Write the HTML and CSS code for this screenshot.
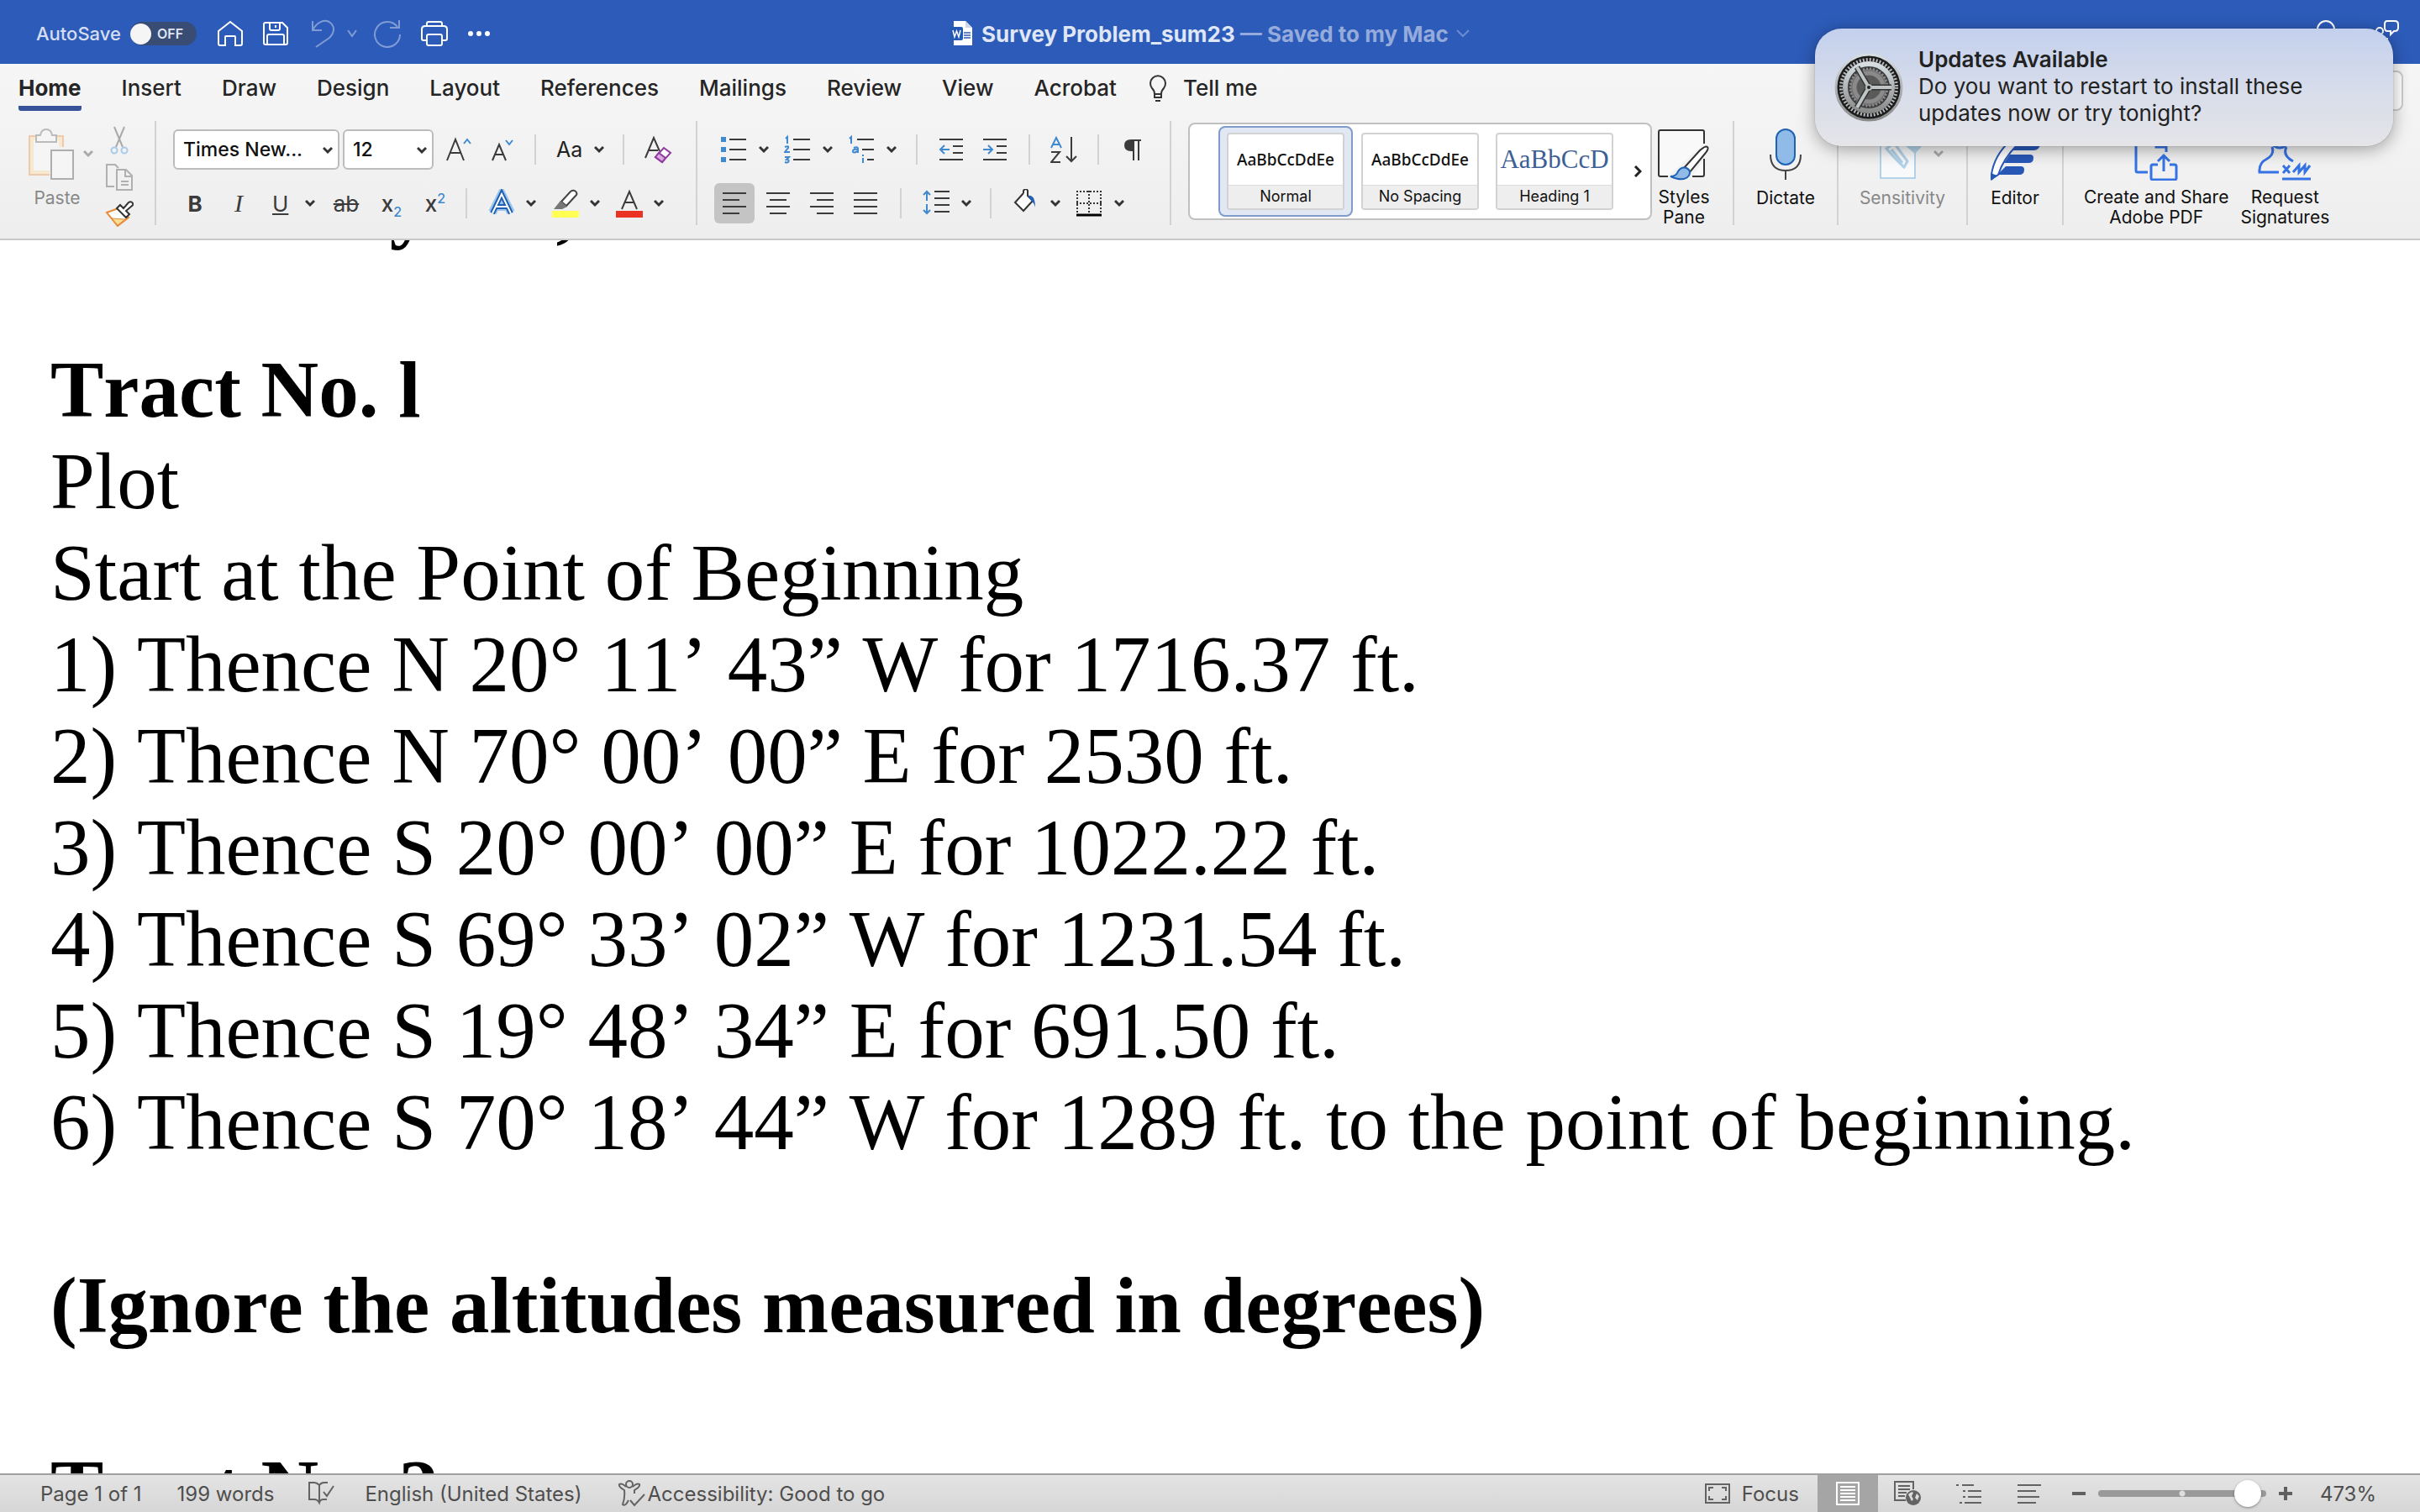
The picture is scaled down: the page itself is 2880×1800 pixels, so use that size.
FILE: index.html
```html
<!DOCTYPE html>
<html lang="en">
<head>
    <meta charset="UTF-8">
    <title>Survey Problem_sum23</title>
    <link rel="stylesheet" href="styles.css">
</head>
<body>
    <!-- shared icons -->
    <svg class="defs" width="0" height="0">
        <symbol id="chev" viewBox="0 0 12 10"><path d="M1 2l5 5 5-5" fill="none" stroke="currentColor" stroke-width="3"/></symbol>
    </svg>

    <div class="app">
        <header class="titlebar">
            <div class="quick">
                <label class="autosave" for="autosave">AutoSave</label>
                <span class="toggle"><input type="checkbox" id="autosave"><span>OFF</span></span>
                <button class="tb home" aria-label="Home"><svg width="32" height="32" viewBox="0 0 32 32"><path d="M2 13L16 2l14 11v15q0 2-2 2h-6V20q0-1-1-1H11q-1 0-1 1v10H4q-2 0-2-2z"/></svg></button>
                <button class="tb save" aria-label="Save"><svg width="32" height="32" viewBox="0 0 32 32"><path d="M4 3h20l6 6v18q0 2-2 2H4q-2 0-2-2V5q0-2 2-2zM9 3v7q0 2 2 2h8q2 0 2-2V3M6 29V19q0-2 2-2h16q2 0 2 2v10M16 6v3"/></svg></button>
                <button class="tb undo" aria-label="Undo" disabled><svg width="32" height="34" viewBox="0 0 32 34"><path d="M4 2v11h11M4 13C9 3 19-1 25 4c6 5 5 12-1 18L8 33"/></svg></button>
                <button class="tb small" aria-label="Undo options" disabled><svg width="14" height="12" viewBox="0 0 14 12"><path d="M2 2l5 7 5-7"/></svg></button>
                <button class="tb redo" aria-label="Redo" disabled><svg width="34" height="34" viewBox="0 0 34 34"><path d="M31 1v9H20M29 9A15 15 0 1 0 32 18"/></svg></button>
                <button class="tb print" aria-label="Print"><svg width="34" height="32" viewBox="0 0 34 32"><path d="M8 7V4q0-2 2-2h14q2 0 2 2v3M8 24H4q-2 0-2-2V11q0-4 4-4h22q4 0 4 4v11q0 2-2 2h-4M10 17h14q2 0 2 2v9q0 2-2 2H10q-2 0-2-2v-9q0-2 2-2z"/></svg></button>
                <button class="tb dots" aria-label="More"><svg width="28" height="8" viewBox="0 0 28 8"><g fill="#fff" stroke="none"><circle cx="4" cy="4" r="3"/><circle cx="14" cy="4" r="3"/><circle cx="24" cy="4" r="3"/></g></svg></button>
            </div>
            <div class="doc-title">
                <svg width="28" height="32" viewBox="0 0 28 32"><path d="M4 1h14l8 8v21H4z" fill="#fff"/><path d="M18 1l8 8h-8z" fill="#d0d7e6"/><path d="M16 15h8M16 18h8M16 21h8" stroke="#2d5cba" stroke-width="1.5"/><rect y="8" width="15" height="16" rx="2" fill="#2458b5"/><path d="M3 12l2 8 2.500-7 2.500 7 2-8" fill="none" stroke="#fff" stroke-width="1.5"/></svg>
                <h1>Survey Problem_sum23 <span>— Saved to my Mac</span></h1>
                <svg width="16" height="12" viewBox="0 0 16 12"><path d="M1 2l7 7 7-7" fill="none" stroke="#6c8cce" stroke-width="2"/></svg>
            </div>
            <div class="account">
                <svg width="24" height="32" viewBox="0 0 24 32"><circle cx="12" cy="12" r="10"/></svg>
                <svg width="30" height="34" viewBox="0 0 30 34"><path d="M15 2h9q4 0 4 4v4q0 4-4 4h-1l-4 4v-4h-4q-3 0-3-4V6q0-4 3-4z"/><circle cx="6" cy="14" r="4"/><path d="M1 31q0-8 7-8h8"/></svg>
            </div>
        </header>

        <div class="ribbon">
            <nav class="tabs">
                <a href="#" class="active">Home</a>
                <a href="#">Insert</a>
                <a href="#">Draw</a>
                <a href="#">Design</a>
                <a href="#">Layout</a>
                <a href="#">References</a>
                <a href="#">Mailings</a>
                <a href="#">Review</a>
                <a href="#">View</a>
                <a href="#">Acrobat</a>
                <a href="#" class="tell"><svg width="24" height="32" viewBox="0 0 24 32"><path d="M8 23q0-4-3-7a9 9 0 1 1 14 0q-3 3-3 7zM8 23v4h8v-4M9 31h6" fill="none" stroke="#333" stroke-width="2"/></svg>Tell me</a>
                <button class="share" aria-label="Share"></button>
            </nav>

            <div class="tools">
                <div class="group clipboard">
                    <button class="big paste" disabled>
                        <span class="pic"><svg width="56" height="62" viewBox="0 0 56 62"><path d="M2 9h40v46H2z" fill="#f5e9cf" stroke="#efc9ab" stroke-width="2"/><path d="M7 14h30v36H7z" fill="#f5f5f5"/><path d="M10 8h5q1-7 7-7t7 7h5v8H10z" fill="#f5f5f5" stroke="#bbb" stroke-width="2"/><path d="M26 22h30v40H26z" fill="#f2f2f2"/><path d="M28 26h26v34H28z" fill="#f5f5f5" stroke="#aeaeae" stroke-width="2"/></svg><svg class="chev"><use href="#chev"/></svg></span>
                        Paste
                    </button>
                    <div class="stack">
                        <button aria-label="Cut" disabled><svg width="34" height="34" viewBox="0 0 34 34"><path d="M11 1l10 24M23 1L13 25" fill="none" stroke="#aaa" stroke-width="2"/><circle cx="11" cy="29" r="3.5" fill="none" stroke="#a9cbea" stroke-width="2"/><circle cx="23" cy="29" r="3.5" fill="none" stroke="#a9cbea" stroke-width="2"/></svg></button>
                        <button aria-label="Copy" disabled><svg width="34" height="34" viewBox="0 0 34 34"><path d="M11 28H2V2h10l4 4M14 8h11l7 7v17H14zM24 8v8h8M19 22h9M19 26h9" fill="none" stroke="#b0b0b0" stroke-width="2"/></svg></button>
                        <button aria-label="Format painter"><svg width="34" height="32" viewBox="0 0 34 32"><path d="M2 15l14-5 12 11-13 10z" fill="#fff" stroke="#e68c3c" stroke-width="2"/><path d="M8 22l16 1-9 7z" fill="#f8dd92" stroke="#e68c3c"/><path d="M14 10l4-4 4 4 6-7q3-2 5 1 1 2-1 3l-7 6 4 4-4 4z" fill="#fff" stroke="#333" stroke-width="2"/></svg></button>
                    </div>
                </div>

                <div class="group font">
                    <div class="row top">
                        <span class="pick family"><select aria-label="Font"><option>Times New...</option></select><svg class="chev"><use href="#chev"/></svg></span>
                        <span class="pick size"><select aria-label="Font size"><option>12</option></select><svg class="chev"><use href="#chev"/></svg></span>
                        <button class="grow" aria-label="Grow font"><svg width="32" height="32" viewBox="0 0 32 32"><path d="M2 29L12 4l10 25M6 20h12" class="ink"/><path d="M22 9l4-5 4 5" class="blue"/></svg></button>
                        <button class="shrink" aria-label="Shrink font"><svg width="32" height="32" viewBox="0 0 32 32"><path d="M4 29l8-19 8 19M7 22h10" class="ink"/><path d="M20 5l4 5 4-5" class="blue"/></svg></button>
                        <i class="sep"></i>
                        <button class="case">Aa<svg class="chev"><use href="#chev"/></svg></button>
                        <i class="sep"></i>
                        <button class="clear" aria-label="Clear formatting"><svg width="34" height="34" viewBox="0 0 34 34"><path d="M2 27L12 3l7 16M6 18h11" class="ink"/><path d="M24 15l8 6-10 11-8-6z" fill="#fff" stroke="#9139a0" stroke-width="2"/><path d="M18 21l8 6-4 5-8-6z" fill="#d9a9df" stroke="#9139a0" stroke-width="2"/></svg></button>
                    </div>
                    <div class="row bottom">
                        <button class="fmt"><b>B</b></button>
                        <button class="fmt"><i class="italic">I</i></button>
                        <button class="fmt under"><u>U</u><svg class="chev"><use href="#chev"/></svg></button>
                        <button class="fmt strike"><s>ab</s></button>
                        <button class="fmt"><span class="x">x<sub>2</sub></span></button>
                        <button class="fmt"><span class="x">x<sup>2</sup></span></button>
                        <i class="sep"></i>
                        <button class="color" aria-label="Text effects"><svg width="34" height="34" viewBox="0 0 34 34"><path d="M6 28L17 6l11 22M10 21h14" fill="none" stroke="#9cc6ee" stroke-width="10"/><path d="M6 29L17 6l11 23M10 21h14" fill="none" stroke="#1f5fae" stroke-width="6"/><path d="M6 29L17 6l11 23M10 21h14" fill="none" stroke="#fff" stroke-width="2"/></svg><svg class="chev"><use href="#chev"/></svg></button>
                        <button class="color" aria-label="Highlight"><svg width="34" height="34" viewBox="0 0 34 34"><path d="M1 26h32v8H1z" fill="#ffff54"/><path d="M12 15L23 3q4-3 7 1 1 2 0 3L18 20z" fill="#fff" stroke="#444" stroke-width="2"/><path d="M11 14l8 7-6 3H3z" fill="#777"/></svg><svg class="chev"><use href="#chev"/></svg></button>
                        <button class="color" aria-label="Font color"><svg width="34" height="34" viewBox="0 0 34 34"><path d="M1 26h32v8H1z" fill="#ea3323"/><path d="M8 24l9-21 9 21M12 16h11" class="ink"/></svg><svg class="chev"><use href="#chev"/></svg></button>
                    </div>
                </div>

                <div class="group para">
                    <div class="row top">
                        <button class="list" aria-label="Bullets"><svg width="32" height="34" viewBox="0 0 32 34"><path d="M1 2h6v6H1zM1 14h6v6H1zM1 26h6v6H1z" fill="#4189cf"/><path d="M11 5h20M11 17h20M11 29h20" class="ink"/></svg><svg class="chev"><use href="#chev"/></svg></button>
                        <button class="list" aria-label="Numbering"><svg width="32" height="34" viewBox="0 0 32 34"><path d="M2 4l2-2v8M1 14q5-2 4 1l-4 5h6M1 26h5l-3 3q4 0 2 3-1 1-4 0" class="blue"/><path d="M11 5h20M11 17h20M11 29h20" class="ink"/></svg><svg class="chev"><use href="#chev"/></svg></button>
                        <button class="list" aria-label="Multilevel list"><svg width="32" height="34" viewBox="0 0 32 34"><path d="M2 4l2-2v8M7 15q5-2 5 1v5M12 17q-6-1-6 2t6 0M18 27v6M18 23v2" class="blue"/><path d="M11 5h20M17 17h14M23 29h8" class="ink"/></svg><svg class="chev"><use href="#chev"/></svg></button>
                        <i class="sep"></i>
                        <button class="indent" aria-label="Decrease indent"><svg width="30" height="34" viewBox="0 0 30 34"><path d="M1 5h28M17 13h12M17 21h12M1 29h28" class="ink"/><path d="M13 17H2M7 12l-5 5 5 5" class="blue"/></svg></button>
                        <button class="indent" aria-label="Increase indent"><svg width="30" height="34" viewBox="0 0 30 34"><path d="M1 5h28M17 13h12M17 21h12M1 29h28" class="ink"/><path d="M1 17h11M7 12l5 5-5 5" class="blue"/></svg></button>
                        <i class="sep"></i>
                        <button class="sort" aria-label="Sort"><svg width="32" height="34" viewBox="0 0 32 34"><path d="M1 15L7 3l6 12M3 11h8" class="blue"/><path d="M1 20h10L1 32h11M25 2v29M19 25l6 6 6-6" class="ink"/></svg></button>
                        <i class="sep"></i>
                        <button class="pilcrow" aria-label="Show marks"><svg width="22" height="34" viewBox="0 0 22 34"><path d="M9 6h12M12 6v24M18 6v24" class="ink"/><path d="M12 5v14H9Q1 19 1 12t8-7z" fill="#3b3b3b"/></svg></button>
                    </div>
                    <div class="row bottom">
                        <button class="align on" aria-label="Align left"><svg width="30" height="30" viewBox="0 0 30 30"><path d="M1 3h28M1 11h20M1 19h28M1 27h20" class="ink"/></svg></button>
                        <button class="align" aria-label="Center"><svg width="30" height="30" viewBox="0 0 30 30"><path d="M1 3h28M5 11h20M1 19h28M5 27h20" class="ink"/></svg></button>
                        <button class="align" aria-label="Align right"><svg width="30" height="30" viewBox="0 0 30 30"><path d="M1 3h28M9 11h20M1 19h28M9 27h20" class="ink"/></svg></button>
                        <button class="align" aria-label="Justify"><svg width="30" height="30" viewBox="0 0 30 30"><path d="M1 3h28M1 11h28M1 19h28M1 27h28" class="ink"/></svg></button>
                        <i class="sep"></i>
                        <button class="spacing" aria-label="Line spacing"><svg width="34" height="38" viewBox="0 0 34 38"><path d="M15 5h18M15 13h18M15 21h18M15 29h18" class="ink"/><path d="M6 16V5M2 9l4-4 4 4M6 20v11M2 27l4 4 4-4" class="blue"/></svg><svg class="chev"><use href="#chev"/></svg></button>
                        <i class="sep"></i>
                        <button class="shade" aria-label="Shading"><svg width="30" height="34" viewBox="0 0 30 34"><path d="M12 5L2 16l10 10 11-12-6-6V2q-2-4-5 0v3" fill="#fff" stroke="#333" stroke-width="2"/><path d="M17 8q9-2 9 14-1-5-4-7z" fill="#2560b3"/></svg><svg class="chev"><use href="#chev"/></svg></button>
                        <button class="border-btn" aria-label="Borders"><svg width="32" height="32" viewBox="0 0 32 32"><path d="M1 2h30M1 16h30M2 1v26M16 1v26M30 1v26" fill="none" stroke="#333" stroke-width="2" stroke-dasharray="2 2"/><path d="M1 30h30" stroke="#000" stroke-width="3"/></svg><svg class="chev"><use href="#chev"/></svg></button>
                    </div>
                </div>

                <div class="group styles">
                    <div class="gallery">
                        <button class="style on"><span class="card"><span class="sample">AaBbCcDdEe</span><span class="name">Normal</span></span></button>
                        <button class="style"><span class="card"><span class="sample">AaBbCcDdEe</span><span class="name">No Spacing</span></span></button>
                        <button class="style"><span class="card"><span class="sample heading">AaBbCcD</span><span class="name">Heading 1</span></span></button>
                        <button class="next" aria-label="More styles"><svg width="10" height="14" viewBox="0 0 10 14"><path d="M2 1l6 6-6 6" fill="none" stroke="#222" stroke-width="3"/></svg></button>
                    </div>
                    <button class="big pane"><span class="pic"><svg width="62" height="62" viewBox="0 0 62 62"><path d="M12 57H3q-2 0-2-2V4q0-2 2-2h50q2 0 2 2v14M55 36v19q0 2-2 2H41" fill="#f9f9f9" stroke="#333" stroke-width="2"/><path d="M31 47L50 26q7-6 9-4t-3 8L38 52z" fill="#fff" stroke="#333" stroke-width="2"/><path d="M15 57q7 0 9-6 4-6 10-4 6 3 3 9-6 8-22 1z" fill="#90bbe8" stroke="#1e62b4" stroke-width="2"/></svg></span>Styles<br>Pane</button>
                </div>

                <div class="group dictate"><button class="big"><span class="pic"><svg width="38" height="62" viewBox="0 0 38 62"><rect x="8" y="1" width="22" height="42" rx="11" fill="#90bbe8" stroke="#1e62b4" stroke-width="2"/><path d="M1 31q0 19 18 19t18-19M19 50v11" fill="none" stroke="#444" stroke-width="2"/></svg></span>Dictate</button></div>

                <div class="group sensitivity"><button class="big" disabled><span class="pic"><svg width="54" height="62" viewBox="0 0 54 62"><path d="M1 5h41v54H1z" fill="#f7f9fb" stroke="#b2d2e9" stroke-width="2"/><path d="M8 24l9-7 16 22-4 7q-8-7-21-22zM14 25l13 16" fill="none" stroke="#b2d2e9" stroke-width="3"/><path d="M30 20l12 10 11-12z" fill="#b2d2e9"/></svg><svg class="chev"><use href="#chev"/></svg></span>Sensitivity</button></div>

                <div class="group editor"><button class="big"><span class="pic"><svg width="62" height="62" viewBox="0 0 62 62"><path d="M30 17h32q-2 9-9 9H24zM25 31h24q4 0 4 4 0 6-6 6H18zM20 45h18q4 0 4 4 0 6-6 6H10z" fill="#2858b6"/><path d="M3 55Q6 32 26 14l8 5Q17 36 11 55l-8 5z" fill="#fff" stroke="#2858b6" stroke-width="2"/><path d="M2 53l8 3-7 6z" fill="#2858b6"/></svg></span>Editor</button></div>

                <div class="group adobe">
                    <button class="big"><span class="pic"><svg width="52" height="62" viewBox="0 0 52 62"><path d="M16 52H4q-2 0-2-2V4h24l12 16v8M26 4v18h12" class="acro"/><path d="M28 43h-6q-2 0-2 2v14q0 2 2 2h26q2 0 2-2V45q0-2-2-2h-6M35 51V32M28 39l7-7 7 7" class="acro"/></svg></span>Create and Share<br>Adobe PDF</button>
                    <button class="big"><span class="pic"><svg width="64" height="62" viewBox="0 0 64 62"><path d="M25 52H2q-1-11 9-16 9-5 6-14M34 22q-5 10 8 17" class="acro"/><circle cx="26" cy="12" r="11" class="acro"/><path d="M30 44l8 9M38 44l-8 9M42 52l7-8v8l7-8v8l6-8M29 60h34" class="acro"/></svg></span>Request<br>Signatures</button>
                </div>
            </div>
        </div>

        <main class="document">
            <p><strong>Lot Survey Set,</strong></p>
            <p>&nbsp;</p>
            <p><strong>Tract No. l</strong></p>
            <p>Plot</p>
            <p>Start at the Point of Beginning</p>
            <p>1) Thence N 20° 11’ 43” W for 1716.37 ft.</p>
            <p>2) Thence N 70° 00’ 00” E for 2530 ft.</p>
            <p>3) Thence S 20° 00’ 00” E for 1022.22 ft.</p>
            <p>4) Thence S 69° 33’ 02” W for 1231.54 ft.</p>
            <p>5) Thence S 19° 48’ 34” E for 691.50 ft.</p>
            <p>6) Thence S 70° 18’ 44” W for 1289 ft. to the point of beginning.</p>
            <p>&nbsp;</p>
            <p><strong>(Ignore the altitudes measured in degrees)</strong></p>
            <p>&nbsp;</p>
            <p><strong>Tract No. 2</strong></p>
        </main>

        <footer class="status">
            <span class="page">Page 1 of 1</span>
            <span class="words">199 words</span>
            <svg width="32" height="30" viewBox="0 0 32 30"><path d="M14 5q-3-3-6-3H2v20h6q4 0 6 4 1-4 5-4h4M14 5v21M14 5q2-3 6-3h4M19 13l4 5 8-12" class="stat"/></svg>
            <span class="lang">English (United States)</span>
            <span class="access"><svg width="34" height="32" viewBox="0 0 34 32"><circle cx="14" cy="5" r="4" class="stat"/><path d="M10 8Q5 3 2 5q-1 3 6 7 1 9-2 17 3 3 7-5M18 8q5-5 8-3 1 3-6 7v4M15 24l5 6L32 17" class="stat"/></svg>Accessibility: Good to go</span>
            <div class="views">
                <button class="focus"><svg width="30" height="24" viewBox="0 0 30 24"><path d="M1 1h28v22H1zM5 9V5h5M20 5h5v4M25 15v4h-5M10 19H5v-4" class="stat"/></svg>Focus</button>
                <button class="view on" aria-label="Print layout"><svg width="28" height="28" viewBox="0 0 28 28"><path d="M1 1h26v26H1zM5 6h18M5 10h18M5 14h18M5 18h18M5 22h18" fill="none" stroke="#fff" stroke-width="2"/></svg></button>
                <button class="view" aria-label="Web layout"><svg width="34" height="30" viewBox="0 0 34 30"><path d="M23 10V1H1v22h13M5 6h14M5 10h14M5 14h10M5 18h8" class="stat"/><circle cx="23" cy="20" r="9" fill="#636363"/><path d="M17 16q4-4 6-2l-2 4 2 4-2 2zM27 15l3 3-2 5-3-3z" fill="#ddd"/></svg></button>
                <button class="view" aria-label="Outline"><svg width="32" height="26" viewBox="0 0 32 26"><path d="M1 3h3M8 3h14M9 10h3M15 10h16M9 17h3M15 17h16M5 24h3M11 24h20" class="stat"/></svg></button>
                <button class="view" aria-label="Draft"><svg width="30" height="26" viewBox="0 0 30 26"><path d="M1 3h28M1 10h22M1 17h26M1 24h22" class="stat"/></svg></button>
                <button class="zoom-btn" aria-label="Zoom out"><svg width="18" height="18" viewBox="0 0 18 18"><path d="M1 9h16" stroke="#606060" stroke-width="4"/></svg></button>
                <input type="range" min="10" max="500" value="482" aria-label="Zoom">
                <button class="zoom-btn" aria-label="Zoom in"><svg width="18" height="18" viewBox="0 0 18 18"><path d="M1 9h16M9 1v16" stroke="#606060" stroke-width="4"/></svg></button>
                <span class="percent">473%</span>
            </div>
        </footer>

        <aside class="notice">
            <svg width="84" height="84" viewBox="0 0 84 84">
                <defs><linearGradient id="metal" x2="0" y2="1"><stop stop-color="#d6dee2"/><stop offset="1" stop-color="#8a8a8a"/></linearGradient></defs>
                <circle cx="42" cy="42" r="39" fill="#1c1c1c" stroke="url(#metal)" stroke-width="3"/>
                <circle cx="42" cy="42" r="33" fill="none" stroke="#b4b8ba" stroke-width="4" stroke-dasharray="2 2"/>
                <circle cx="42" cy="42" r="28" fill="#3a3a3a" stroke="url(#metal)" stroke-width="6"/>
                <circle cx="42" cy="42" r="22" fill="#6e6e6e" stroke="#8c8c8c" stroke-width="3" stroke-dasharray="2 2"/>
                <circle cx="42" cy="42" r="17" fill="#5a5a5a" stroke="#8a8a8a" stroke-width="5"/>
                <path d="M42 42h27M42 42L28 18M42 42L28 66" stroke="#333" stroke-width="7"/>
                <path d="M42 42h27M42 42L28 18M42 42L28 66" stroke="#bfc4c6" stroke-width="4"/>
                <circle cx="42" cy="42" r="4" fill="#bbb"/><circle cx="42" cy="42" r="2" fill="#222"/>
            </svg>
            <div>
                <h2>Updates Available</h2>
                <p>Do you want to restart to install these updates now or try tonight?</p>
            </div>
        </aside>
    </div>
</body>
</html>
```
FILE: styles.css
```css
* {
    margin: 0;
    padding: 0;
    box-sizing: border-box;
}

body {
    font-family: Inter, "Liberation Sans", sans-serif;
    color: #222;
    background: #fff;
}

button, select {
    font: inherit;
    color: inherit;
    background: none;
    border: none;
}

svg {
    display: block;
    flex: none;
}

.defs {
    position: absolute;
}

.app {
    height: 100vh;
    display: flex;
    flex-direction: column;
    position: relative;
    overflow: hidden;
}

/* Title bar */
.titlebar {
    height: 76px;
    padding: 4px 24px 0;
    display: grid;
    grid-template-columns: 1fr auto 1fr;
    align-items: center;
    background: #2d5bb9;
    color: #dfe6f5;
}

.quick {
    display: flex;
    align-items: center;
    padding-left: 19px;
}

.autosave {
    font-size: 22px;
    font-weight: 500;
    width: 112px;
    color: #d5def1;
}

.toggle {
    width: 79px;
    height: 28px;
    border-radius: 14px;
    background: #394c73;
    display: flex;
    align-items: center;
    font-size: 16px;
    font-weight: 600;
    margin-right: 24px;
}

.toggle input {
    appearance: none;
    width: 25px;
    height: 25px;
    border-radius: 50%;
    background: #f5f5f5;
    margin-right: 7px;
}

.tb svg, .account svg {
    fill: none;
    stroke: #fff;
    stroke-width: 2;
}

.tb:disabled {
    opacity: 0.4;
}

.home {
    margin-right: 22px;
}

.save {
    margin-right: 24px;
}

.undo {
    margin-right: 12px;
}

.small {
    margin-right: 18px;
}

.redo {
    margin-right: 22px;
}

.print {
    margin-right: 22px;
}

.doc-title {
    display: flex;
    align-items: center;
    gap: 9px;
}

.doc-title h1 {
    font-size: 26px;
    font-weight: 700;
}

.doc-title h1 span {
    color: #95abdb;
}

.account {
    display: flex;
    justify-content: flex-end;
    gap: 46px;
}

/* Ribbon */
.ribbon {
    height: 210px;
    background: linear-gradient(#f6f6f6, #eeeeee);
    border-bottom: 2px solid #c8c8c8;
}

.tabs {
    height: 64px;
    padding: 8px 20px 0 22px;
    display: flex;
    align-items: flex-start;
    gap: 48px;
    font-size: 26px;
    font-weight: 500;
    line-height: 42px;
}

.tabs a {
    color: #252525;
    text-decoration: none;
}

.tabs .active {
    font-weight: 700;
    border-bottom: 6px solid #365399;
    border-radius: 3px;
}

.tabs .tell {
    display: flex;
    align-items: center;
    gap: 18px;
    margin-left: -11px;
}

.share {
    width: 120px;
    height: 48px;
    margin-left: auto;
    background: #fff;
    border: 2px solid #ccc;
    border-radius: 8px;
}

.tools {
    display: flex;
    padding-top: 4px;
}

.group {
    height: 124px;
    display: flex;
    border-right: 2px solid #d2d2d2;
}

.chev {
    width: 12px;
    height: 10px;
    color: #333;
}

.row {
    display: flex;
    align-items: center;
    height: 48px;
}

.row button {
    display: flex;
    align-items: center;
}

.sep {
    width: 2px;
    height: 36px;
    background: #d2d2d2;
}

.ink {
    fill: none;
    stroke: #3b3b3b;
    stroke-width: 2;
}

.blue {
    fill: none;
    stroke: #4189cf;
    stroke-width: 2;
}

.big {
    display: flex;
    flex-direction: column;
    align-items: center;
    font-size: 21px;
    line-height: 24px;
    color: #111;
    white-space: nowrap;
}

.big:disabled {
    color: #888;
}

.big:disabled .chev {
    color: #aaa;
}

.pic {
    height: 72px;
    padding-top: 9px;
    margin-bottom: 8px;
    display: flex;
    position: relative;
}

.pic .chev {
    position: absolute;
    left: calc(100% + 10px);
    top: 34px;
}

.clipboard {
    width: 186px;
    padding-left: 32px;
}

.paste {
    width: 72px;
    margin-right: 21px;
}

.paste .pic {
    margin-right: 14px;
}

.stack {
    display: flex;
    flex-direction: column;
    gap: 10px;
    padding-top: 6px;
}

.font, .para {
    flex-direction: column;
    padding-top: 10px;
    gap: 16px;
}

.font {
    width: 644px;
    padding-left: 20px;
}

.pick {
    position: relative;
    height: 48px;
    margin-right: 4px;
}

.pick select {
    appearance: none;
    width: 100%;
    height: 100%;
    padding-left: 10px;
    background: #fff;
    border: 2px solid #bcbcbc;
    border-radius: 6px;
    font-size: 23px;
    font-weight: 500;
    color: #111;
}

.pick .chev {
    position: absolute;
    right: 8px;
    top: 20px;
}

.family {
    width: 198px;
}

.size {
    width: 108px;
}

.grow {
    margin: 0 20px 0 10px;
}

.shrink {
    margin-right: 22px;
}

.case {
    gap: 14px;
    font-size: 25px;
    padding: 0 22px 0 24px;
}

.clear {
    margin-left: 23px;
}

.bottom {
    color: #3b3b3b;
}

.fmt {
    width: 52px;
    justify-content: center;
    font-size: 26px;
}

.italic {
    font-family: "Liberation Serif", serif;
    font-size: 30px;
}

.under {
    width: 74px;
    gap: 20px;
    justify-content: flex-start;
    padding-left: 14px;
}

.strike {
    width: 56px;
}

.x {
    font-weight: 500;
}

.x sub, .x sup {
    font-size: 16px;
    color: #4189cf;
    line-height: 0;
}

.fmt + .sep {
    margin: 0 24px 0 10px;
}

.color {
    gap: 12px;
    margin-right: 18px;
}

.para {
    width: 564px;
    padding-left: 20px;
}

.para .top {
    padding-left: 7px;
}

.list {
    gap: 14px;
    margin-right: 18px;
}

.list + .sep {
    margin: 0 25px 0 5px;
}

.indent {
    margin-right: 22px;
}

.indent + .sep {
    margin: 0 24px 0 3px;
}

.sort {
    margin-right: 24px;
}

.pilcrow {
    margin-left: 29px;
}

.align {
    width: 48px;
    height: 48px;
    margin-right: 4px;
    justify-content: center;
}

.row .on {
    background: #c4c4c4;
    border-radius: 6px;
}

.align + .sep {
    margin: 0 24px 0 13px;
}

.spacing {
    gap: 13px;
    margin-right: 22px;
}

.shade {
    gap: 14px;
    margin: 0 18px 0 26px;
}

.border-btn {
    gap: 14px;
}

.styles {
    width: 670px;
    padding-left: 20px;
}

.gallery {
    width: 552px;
    height: 116px;
    margin-top: 2px;
    display: flex;
    align-items: center;
    background: #fff;
    border: 2px solid #c0c0c0;
    border-radius: 8px;
    padding-left: 34px;
}

.style {
    width: 160px;
    height: 108px;
    padding: 8px 10px;
    border-radius: 8px;
}

.style.on {
    padding: 6px 8px;
    background: #e2e8f3;
    border: 2px solid #7e9bcb;
}

.card {
    display: block;
    height: 92px;
    border: 2px solid #d2d2d2;
    border-radius: 4px;
    background: #fff;
    color: #111;
}

.sample {
    display: block;
    height: 60px;
    line-height: 60px;
    font-family: "Noto Sans", sans-serif;
    font-size: 19px;
    font-weight: 500;
}

.heading {
    font-family: "Liberation Serif", serif;
    font-size: 31px;
    color: #3d5f96;
}

.name {
    display: block;
    height: 28px;
    line-height: 26px;
    font-size: 18px;
    background: #eee;
    border-top: 1px solid #ddd;
}

.next {
    margin-left: 14px;
}

.dictate .big, .sensitivity .big, .editor .big {
    flex: 1;
}

.pane {
    width: 76px;
}

.dictate {
    width: 124px;
}

.sensitivity {
    width: 154px;
}

.editor {
    width: 114px;
}

.adobe {
    padding-left: 24px;
    gap: 14px;
    border: none;
}

.acro {
    fill: none;
    stroke: #3572e3;
    stroke-width: 3;
}

/* Page text */
.document {
    flex: 1;
    min-height: 0;
    overflow: hidden;
    padding-left: 60px;
    font-family: "Liberation Serif", "Times New Roman", serif;
    font-size: 95px;
    font-kerning: none;
    line-height: 109px;
    color: #000;
}

.document p:first-child {
    margin-top: -94px;
}

/* Status bar */
.status {
    height: 46px;
    padding: 0 52px 0 48px;
    display: flex;
    align-items: center;
    background: linear-gradient(#e4e4e4, #d6d6d6);
    border-top: 2px solid #a0a0a0;
    font-size: 24px;
    color: #4e4e4e;
}

.stat {
    fill: none;
    stroke: #636363;
    stroke-width: 2;
}

.words {
    margin: 0 40px 0 42px;
}

.lang {
    margin: 0 42px 0 36px;
}

.access {
    display: flex;
    align-items: center;
    gap: 2px;
}

.views {
    margin-left: auto;
    height: 100%;
    display: flex;
    align-items: center;
}

.focus {
    display: flex;
    align-items: center;
    gap: 14px;
    margin-right: 22px;
}

.view {
    width: 72px;
    height: 100%;
    display: flex;
    align-items: center;
    justify-content: center;
}

.view.on {
    background: #a5a5a5;
}

.zoom-btn {
    margin: 0 14px;
}

.status input {
    appearance: none;
    width: 200px;
    height: 8px;
    border-radius: 4px;
    background: radial-gradient(circle, #ddd 3px, #999 4px);
}

.status input::-webkit-slider-thumb {
    appearance: none;
    width: 32px;
    height: 32px;
    border-radius: 50%;
    background: #fff;
    box-shadow: 0 1px 3px rgba(0, 0, 0, 0.4);
}

.percent {
    margin-left: 18px;
}

/* Notification over the ribbon */
.notice {
    position: absolute;
    top: 34px;
    right: 32px;
    width: 688px;
    height: 140px;
    padding: 21px 22px;
    display: flex;
    gap: 17px;
    border-radius: 32px;
    background: linear-gradient(#c3d0ed, #d8ddea 55%, #e5e5e8);
    box-shadow: 0 4px 20px rgba(0, 0, 0, 0.35), 0 0 1px rgba(0, 0, 0, 0.5);
    font-size: 26px;
    line-height: 32px;
}

.notice svg {
    margin-top: 7px;
}

.notice h2 {
    font-size: 26px;
    font-weight: 600;
}
```
